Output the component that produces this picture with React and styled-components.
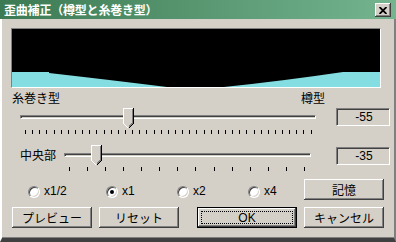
import styled, { createGlobalStyle } from "styled-components";

const GlobalStyle = createGlobalStyle`
  html, body {
    margin: 0;
    padding: 0;
    background: #d4d0c8;
  }
  body {
    font-family: "Liberation Sans", "Noto Sans CJK JP", sans-serif;
    font-size: 12px;
    color: #000;
  }
`;

const Window = styled.div`
  width: 396px;
  height: 242px;
  overflow: hidden;
  display: flex;
  flex-direction: column;
  background: #d4d0c8;
`;

const TitleBar = styled.div`
  height: 19px;
  flex: none;
  display: flex;
  align-items: flex-start;
  padding: 0 5px 0 4px;
  background: linear-gradient(to right, #3b7a52, #74b48f);
`;

const Title = styled.div`
  font-family: "Noto Sans CJK JP", sans-serif;
  font-weight: 700;
  font-size: 12px;
  line-height: 19px;
  color: #fff;
  letter-spacing: -0.2px;
`;

const CloseButton = styled.div`
  margin: 3px 0 0 auto;
  width: 16px;
  height: 14px;
  box-sizing: border-box;
  background: #d4d0c8;
  box-shadow: inset -1px -1px #404040, inset 1px 1px #fff,
    inset -2px -2px #808080;
  display: flex;
  align-items: center;
  justify-content: center;
`;

const Body = styled.div`
  flex: 1;
  display: flex;
  flex-direction: column;
  padding-left: 9px;
  border-left: 2px solid #fff;
  border-right: 2px solid #808080;
  border-bottom: 4px solid #404040;
  box-shadow: inset 0 -1px #808080;
`;

const Preview = styled.div`
  margin-top: 9px;
  width: 370px;
  height: 60px;
  box-sizing: border-box;
  border: 1px solid;
  border-color: #808080 #fff #fff #808080;
  background: #000;
  display: flex;
`;

const LabelRow = styled.div`
  margin: 3px 0 0 1px;
  width: 313px;
  height: 14px;
  display: flex;
  justify-content: space-between;
  font-family: "Noto Sans CJK JP", sans-serif;
  line-height: 14px;
`;

const SliderRow = styled.div`
  margin: ${(p) => p.$top}px 0 0 9px;
  display: flex;
  align-items: flex-start;
`;

const RowLabel = styled.div`
  width: 44px;
  margin-top: 3px;
  font-family: "Noto Sans CJK JP", sans-serif;
  line-height: 14px;
`;

const SliderBox = styled.div`
  position: relative;
  width: ${(p) => p.$width}px;
  padding-top: ${(p) => p.$pad}px;
`;

const Track = styled.div`
  height: 2px;
  border: 1px solid;
  border-color: #808080 #fff #fff #808080;
  box-shadow: inset 1px 1px #404040;
`;

const Ticks = styled.div`
  display: flex;
  justify-content: space-between;
  margin: ${(p) => p.$gap}px ${(p) => p.$right}px 0 ${(p) => p.$left}px;
  height: 4px;
`;

const Tick = styled.span`
  width: 1px;
  height: 4px;
  background: #000;
`;

const ThumbWrap = styled.div`
  position: absolute;
  top: 0;
  width: 11px;
  height: 21px;
`;

const ValueBox = styled.div`
  margin: ${(p) => p.$top}px 0 0 ${(p) => p.$left}px;
  width: 54px;
  height: 18px;
  box-sizing: border-box;
  border: 1px solid;
  border-color: #808080 #fff #fff #808080;
  box-shadow: inset 1px 1px #404040, inset -1px -1px #d4d0c8;
  display: flex;
  align-items: center;
  justify-content: center;
  padding-left: 2px;
  line-height: 14px;
`;

const ControlRow = styled.div`
  margin: 8px 0 0 17px;
  display: flex;
  align-items: flex-start;
`;

const Radio = styled.div`
  width: ${(p) => p.$width}px;
  margin-top: 6px;
  display: flex;
  align-items: center;
  height: 13px;
  line-height: 13px;
`;

const RadioCircle = styled.span`
  width: 12px;
  height: 12px;
  box-sizing: border-box;
  border-radius: 50%;
  background: #fff;
  border: 1px solid;
  border-color: #808080 #fff #fff #808080;
  box-shadow: inset 1px 1px #404040, inset -1px -1px #d4d0c8;
  display: flex;
  align-items: center;
  justify-content: center;
  margin-right: 4px;
`;

const RadioDot = styled.span`
  width: 4px;
  height: 4px;
  border-radius: 50%;
  background: #000;
`;

const ButtonRow = styled.div`
  margin: 7px 0 0 1px;
  display: flex;
`;

const Button = styled.div`
  width: ${(p) => p.$width || 80}px;
  height: 21px;
  margin-left: ${(p) => p.$left || 0}px;
  box-sizing: border-box;
  display: flex;
  align-items: center;
  justify-content: center;
  font-family: "Noto Sans CJK JP", sans-serif;
  line-height: 14px;
  background: #d4d0c8;
  box-shadow: inset -1px -1px #404040, inset 1px 1px #fff,
    inset -2px -2px #808080;
`;

const DefaultButton = styled(Button)`
  border: 1px solid #000;
  padding: 3px;
`;

const Focus = styled.div`
  flex: 1;
  align-self: stretch;
  border: 1px dotted #000;
  display: flex;
  align-items: center;
  justify-content: center;
  font-family: "Liberation Sans", sans-serif;
`;

function Thumb({ left }) {
  return (
    <ThumbWrap style={{ left }}>
      <svg width="11" height="21" viewBox="0 0 11 21" shapeRendering="crispEdges">
        <polygon points="0,0 11,0 11,15 5.5,21 0,15" fill="#d4d0c8" />
        <polyline points="0.5,15.5 0.5,0.5 10,0.5" fill="none" stroke="#fff" />
        <polyline points="10.5,0 10.5,15.5 5.5,20.5" fill="none" stroke="#000" />
        <polyline points="9.5,1 9.5,15 5.5,19.3" fill="none" stroke="#808080" />
        <polyline points="0.5,15.5 5,20" fill="none" stroke="#fff" />
      </svg>
    </ThumbWrap>
  );
}

function Slider({ width, pad, gap, left, right, ticks, thumb }) {
  return (
    <SliderBox $width={width} $pad={pad}>
      <Track />
      <Ticks $gap={gap} $left={left} $right={right}>
        {Array.from({ length: ticks }, (_, i) => (
          <Tick key={i} />
        ))}
      </Ticks>
      <Thumb left={thumb} />
    </SliderBox>
  );
}

function Curve() {
  return (
    <svg width="368" height="58" viewBox="0 0 368 58">
      <path d="M0 58 V43 H37 V44 Q90 50 155 58 Z" fill="#84dde0" />
      <path d="M212 58 Q270 52 331 43 H368 V58 Z" fill="#84dde0" />
    </svg>
  );
}

export default function App() {
  const radios = [
    { label: "x1/2", width: 78 },
    { label: "x1", width: 71, checked: true },
    { label: "x2", width: 71 },
    { label: "x4", width: 56 },
  ];

  return (
    <>
      <GlobalStyle />
      <Window>
        <TitleBar>
          <Title>歪曲補正（樽型と糸巻き型）</Title>
          <CloseButton>
            <svg width="8" height="7" viewBox="0 0 8 7">
              <path d="M0.5 0 L7.5 7 M7.5 0 L0.5 7" stroke="#000" strokeWidth="1.8" />
            </svg>
          </CloseButton>
        </TitleBar>
        <Body>
          <Preview>
            <Curve />
          </Preview>
          <LabelRow>
            <span>糸巻き型</span>
            <span>樽型</span>
          </LabelRow>
          <SliderRow $top={3}>
            <Slider width={296} pad={7} gap={11} left={5} right={4} ticks={41} thumb={103} />
            <ValueBox $top={0} $left={20}>-55</ValueBox>
          </SliderRow>
          <SliderRow $top={11}>
            <RowLabel>中央部</RowLabel>
            <Slider width={247} pad={8} gap={10} left={5} right={6} ticks={14} thumb={27} />
            <ValueBox $top={2} $left={25}>-35</ValueBox>
          </SliderRow>
          <ControlRow>
            {radios.map((r) => (
              <Radio key={r.label} $width={r.width}>
                <RadioCircle>{r.checked && <RadioDot />}</RadioCircle>
                {r.label}
              </Radio>
            ))}
            <Button>記憶</Button>
          </ControlRow>
          <ButtonRow>
            <Button>プレビュー</Button>
            <Button $left={7}>リセット</Button>
            <DefaultButton $left={18} $width={100}>
              <Focus>OK</Focus>
            </DefaultButton>
            <Button $left={7}>キャンセル</Button>
          </ButtonRow>
        </Body>
      </Window>
    </>
  );
}
